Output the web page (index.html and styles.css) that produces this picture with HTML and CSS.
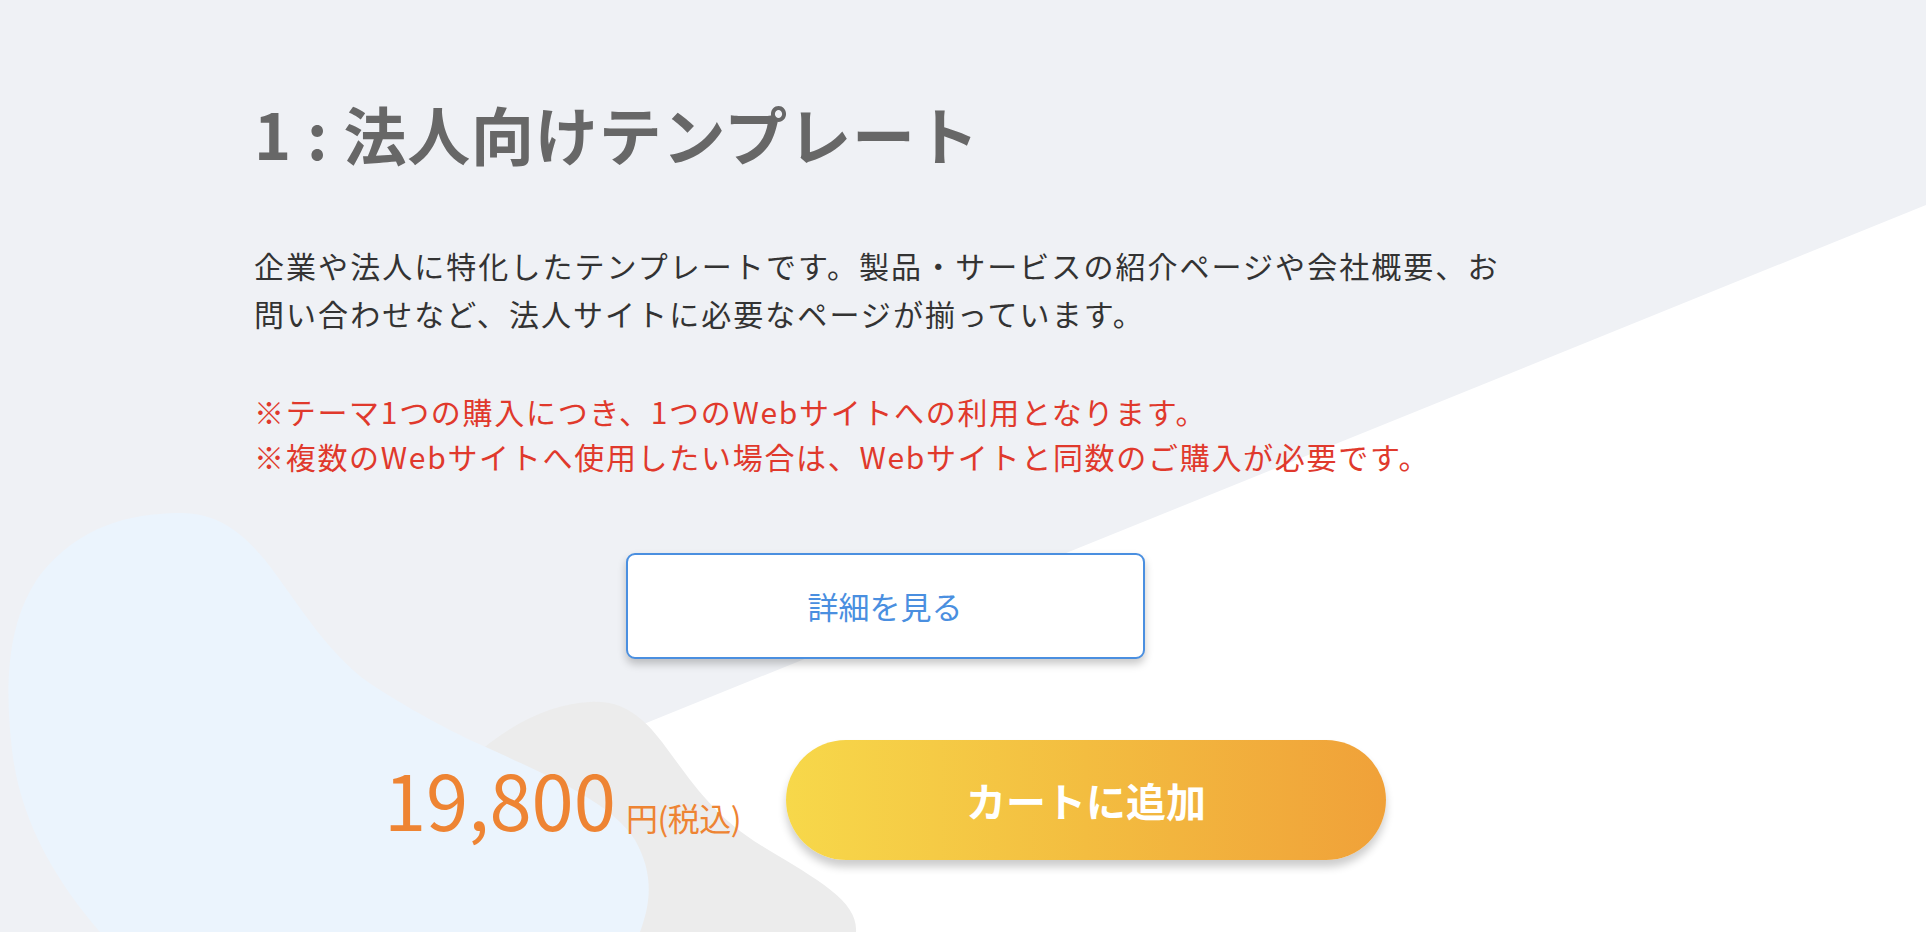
FILE: index.html
```html
<!DOCTYPE html>
<html lang="ja">
<head>
  <meta charset="UTF-8">
  <title>法人向けテンプレート</title>
  <meta name="viewport" content="width=device-width, initial-scale=1.0">
  <link rel="stylesheet" href="styles.css">
</head>
<body>
  <svg class="bg-shapes" viewBox="0 0 1926 932" preserveAspectRatio="none" aria-hidden="true">
    <polygon class="bg-white" points="1926,205 1926,932 130,932"/>
    <path class="bg-gray" d="M590,702 C622,700 642,716 662,742 C692,782 712,815 762,846 C822,882 858,902 856,932 L470,932 L470,760 C510,722 555,703 590,702 Z"/>
    <path class="bg-blue" d="M178,513 C215,512 240,530 265,560 C300,605 330,660 380,690 C420,715 440,725 470,740 C540,772 610,800 635,840 C655,875 650,905 640,932 L100,932 C55,880 20,820 12,750 C4,680 8,620 40,575 C80,525 130,514 178,513 Z"/>
  </svg>

  <main class="product">
    <h1 class="product-title">1 : 法人向けテンプレート</h1>

    <p class="product-desc">企業や法人に特化したテンプレートです。製品・サービスの紹介ページや会社概要、お問い合わせなど、法人サイトに必要なページが揃っています。</p>

    <p class="product-note">※テーマ1つの購入につき、1つのWebサイトへの利用となります。<br>※複数のWebサイトへ使用したい場合は、Webサイトと同数のご購入が必要です。</p>

    <div class="detail-wrap">
      <a class="btn-detail" href="#">詳細を見る</a>
    </div>

    <div class="buy-row">
      <div class="price">
        <span class="price-num">19,800</span>
        <span class="price-unit">円(税込)</span>
      </div>
      <a class="btn-cart" href="#">カートに追加</a>
    </div>
  </main>
</body>
</html>
```

FILE: styles.css
```css
html, body {
  margin: 0;
  padding: 0;
  height: 100%;
}
body {
  position: relative;
  overflow: hidden;
  font-family: "Noto Sans CJK JP", "Noto Sans", sans-serif;
  background: #eff1f5;
  color: #333;
}
.bg-shapes {
  position: absolute;
  left: 0;
  top: 0;
  width: 100%;
  height: 932px;
  z-index: 0;
}
.bg-white {
  fill: #ffffff;
}
.bg-gray {
  fill: #ececec;
}
.bg-blue {
  fill: #ebf4fd;
}
.product {
  position: relative;
  z-index: 1;
  width: 1262px;
  margin-left: 254px;
  padding-top: 95px;
}
.product-title {
  margin: 0;
  font-size: 63px;
  line-height: 1.2;
  font-weight: 700;
  letter-spacing: 0.8px;
  color: #676767;
}
.product-desc {
  margin: 70px 0 0;
  font-size: 30px;
  line-height: 48px;
  letter-spacing: 2.05px;
  color: #333;
}
.product-note {
  margin: 52px 0 0;
  font-size: 30px;
  line-height: 45px;
  letter-spacing: 1.7px;
  color: #e0392c;
}
.detail-wrap {
  display: flex;
  justify-content: center;
  margin-top: 74px;
}
.btn-detail {
  display: flex;
  align-items: center;
  justify-content: center;
  box-sizing: border-box;
  width: 519px;
  height: 106px;
  border: 2px solid #4a8fe0;
  border-radius: 9px;
  background: #fff;
  box-shadow: 0 5px 8px rgba(0, 0, 0, 0.22);
  color: #4a8fe0;
  font-size: 31px;
  text-decoration: none;
}
.buy-row {
  display: flex;
  align-items: center;
  justify-content: center;
  gap: 45px;
  margin-top: 81px;
}
.price {
  display: flex;
  align-items: baseline;
  gap: 10px;
  color: #ee8433;
  margin-top: -4px;
}
.price-num {
  font-size: 76px;
  line-height: 1;
}
.price-unit {
  font-size: 32px;
  line-height: 1;
  letter-spacing: -0.5px;
}
.btn-cart {
  display: flex;
  align-items: center;
  justify-content: center;
  width: 600px;
  height: 120px;
  border-radius: 60px;
  background: linear-gradient(90deg, #f7d84a 0%, #f3bd40 50%, #f0a139 100%);
  box-shadow: 0 7px 8px rgba(0, 0, 0, 0.2);
  color: #fff;
  font-size: 40px;
  font-weight: 700;
  text-decoration: none;
}
```
